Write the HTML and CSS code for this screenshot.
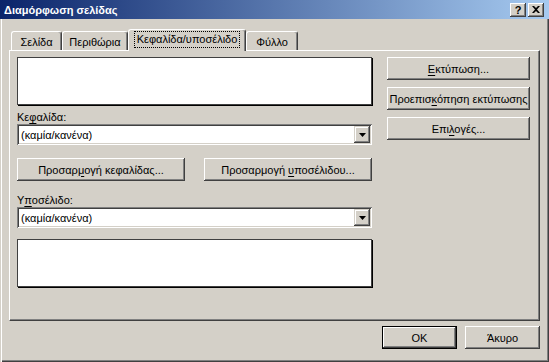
FILE: index.html
```html
<!DOCTYPE html>
<html lang="el">
<head>
  <meta charset="UTF-8" />
  <title>Διαμόρφωση σελίδας</title>
  <link rel="stylesheet" href="styles.css">
</head>
<body>
  <div class="window">
    <div class="titlebar">
      <span class="title">Διαμόρφωση σελίδας</span>
      <div class="caption-buttons">
        <span class="cap-btn help">?</span>
        <span class="cap-btn">
          <svg width="8" height="7" viewBox="0 0 8 7">
            <path d="M0 0h2l2 2 2-2h2L5 3.5 8 7H6L4 5 2 7H0l3-3.5z" fill="#000" />
          </svg>
        </span>
      </div>
    </div>

    <div class="content">
      <div class="tabs">
        <div class="tab t1">Σελίδα</div>
        <div class="tab t2">Περιθώρια</div>
        <div class="tab t3 active"><span class="focus">Κεφαλίδα/υποσέλιδο</span></div>
        <div class="tab t4">Φύλλο</div>
      </div>

      <div class="panel">
        <div class="left">
          <div class="preview"></div>

          <label class="field-label">Κε<u>φ</u>αλίδα:</label>
          <div class="combo">
            <span class="combo-text">(καμία/κανένα)</span>
            <span class="drop">
              <svg width="7" height="4" viewBox="0 0 7 4"><path d="M0 0h7L3.5 4z" fill="#000" /></svg>
            </span>
          </div>

          <div class="custom-row">
            <button class="btn wide">Προσαρ<u>μ</u>ογή κεφαλίδας...</button>
            <button class="btn wide">Προσαρμογή <u>υ</u>ποσέλιδου...</button>
          </div>

          <label class="field-label second">Υ<u>π</u>οσέλιδο:</label>
          <div class="combo">
            <span class="combo-text">(καμία/κανένα)</span>
            <span class="drop">
              <svg width="7" height="4" viewBox="0 0 7 4"><path d="M0 0h7L3.5 4z" fill="#000" /></svg>
            </span>
          </div>

          <div class="preview bottom"></div>
        </div>

        <div class="right">
          <button class="btn"><u>Ε</u>κτύπωση...</button>
          <button class="btn">Προεπισ<u>κ</u>όπηση εκτύπωσης</button>
          <button class="btn">Επι<u>λ</u>ογές...</button>
        </div>
      </div>

      <div class="footer">
        <button class="btn small default">OK</button>
        <button class="btn small">Άκυρο</button>
      </div>
    </div>
  </div>
</body>
</html>
```

FILE: styles.css
```css
/* Base */
* {
  box-sizing: border-box;
}

body {
  margin: 0;
  font-family: "Liberation Sans", "DejaVu Sans", sans-serif;
  font-size: 11px;
  color: #000;
  background: #d4d0c8;
}

u {
  text-decoration-thickness: 1px;
  text-underline-offset: 2px;
}

.window {
  width: 549px;
  height: 362px;
  background: #d4d0c8;
  display: flex;
  flex-direction: column;
  box-shadow: inset 1px 0 #d4d0c8, inset 2px 0 #fff,
    inset -1px -1px #404040, inset -2px -2px #808080;
}

/* Title bar */
.titlebar {
  height: 19px;
  background: linear-gradient(to right, #0a246a, #a6caf0);
  display: flex;
  align-items: center;
  padding: 0 5px 0 4px;
  flex-shrink: 0;
}

.title {
  color: #fff;
  font-weight: bold;
  font-size: 11px;
}

.caption-buttons {
  margin-left: auto;
  display: flex;
  gap: 2px;
}

.cap-btn {
  width: 16px;
  height: 14px;
  background: #d4d0c8;
  display: flex;
  align-items: center;
  justify-content: center;
  box-shadow: inset -1px -1px #404040, inset 1px 1px #fff,
    inset -2px -2px #808080, inset 2px 2px #d4d0c8;
}

.cap-btn.help {
  font-weight: bold;
  font-size: 11px;
  padding-top: 1px;
}

/* Content */
.content {
  flex: 1;
  display: flex;
  flex-direction: column;
  padding: 10px 9px 0 9px;
}

/* Tabs */
.tabs {
  height: 21px;
  display: flex;
  align-items: flex-end;
  padding-left: 2px;
  position: relative;
  z-index: 1;
}

.tab {
  height: 19px;
  background: #d4d0c8;
  border-top: 1px solid #fff;
  border-left: 1px solid #fff;
  border-right: 1px solid #404040;
  border-radius: 3px 3px 0 0;
  box-shadow: inset -1px 0 #808080;
  display: flex;
  align-items: center;
  justify-content: center;
  padding-top: 1px;
}

.t1 { width: 51px; }
.t2 { width: 66px; }
.t3 { width: 118px; }
.t4 { width: 52px; }

.tab.active {
  height: 22px;
  margin-bottom: -1px;
  padding-top: 0;
  padding-bottom: 3px;
}

.focus {
  border: 1px dotted #000;
  padding: 1px 2px;
  line-height: 13px;
}

/* Panel */
.panel {
  height: 271px;
  border-top: 1px solid #fff;
  border-left: 1px solid #fff;
  border-right: 1px solid #404040;
  border-bottom: 1px solid #404040;
  box-shadow: inset -1px -1px #808080;
  padding: 6px 7px;
  display: flex;
  gap: 15px;
}

.left {
  width: 355px;
  display: flex;
  flex-direction: column;
}

.preview {
  height: 48px;
  background: #fff;
  border: 1px solid #404040;
  box-shadow: 1px 1px 0 #000;
}

.preview.bottom {
  margin-top: 11px;
}

.field-label {
  margin-top: 5px;
  line-height: 14px;
  height: 14px;
}

.field-label.second {
  margin-top: 12px;
}

/* Combo */
.combo {
  height: 21px;
  background: #fff;
  display: flex;
  align-items: center;
  padding: 2px;
  box-shadow: inset 1px 1px #808080, inset -1px -1px #fff,
    inset 2px 2px #404040, inset -2px -2px #d4d0c8;
}

.combo-text {
  padding-left: 2px;
}

.drop {
  margin-left: auto;
  width: 16px;
  height: 17px;
  background: #d4d0c8;
  display: flex;
  align-items: center;
  justify-content: center;
  box-shadow: inset -1px -1px #404040, inset 1px 1px #d4d0c8,
    inset -2px -2px #808080, inset 2px 2px #fff;
}

/* Buttons */
.btn {
  height: 23px;
  padding: 0;
  border: none;
  background: #d4d0c8;
  font: inherit;
  color: #000;
  box-shadow: inset -1px -1px #404040, inset 1px 1px #fff,
    inset -2px -2px #808080, inset 2px 2px #d4d0c8;
}

.custom-row {
  margin-top: 13px;
  display: flex;
  justify-content: space-between;
}

.btn.wide {
  width: 168px;
}

.right {
  width: 143px;
  display: flex;
  flex-direction: column;
  gap: 7px;
}

.footer {
  margin-top: 5px;
  display: flex;
  justify-content: flex-end;
  gap: 8px;
}

.btn.small {
  width: 75px;
}

.btn.default {
  border: 1px solid #000;
}
```
